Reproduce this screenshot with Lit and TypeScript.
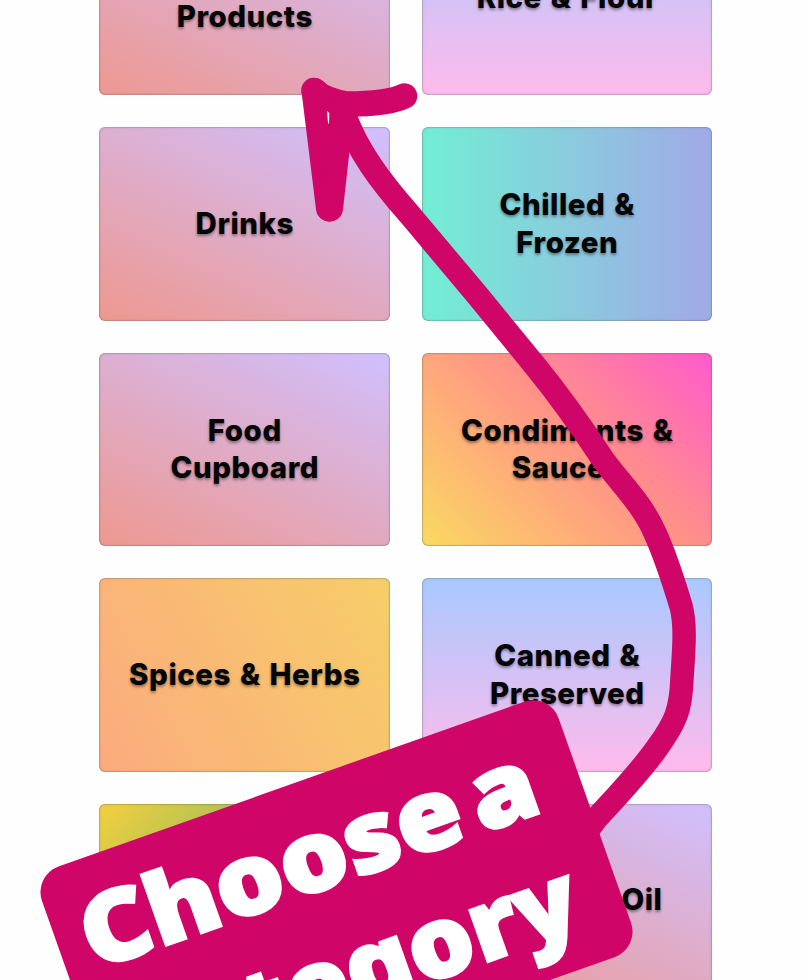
import { LitElement, html, css, svg } from "lit";
import { customElement, property } from "lit/decorators.js";

interface Category {
  // each entry is one line of the label
  lines: string[];
  theme: string;
}

const CATEGORIES: Category[] = [
  { lines: ["Dairy", "Products"], theme: "blush" },
  { lines: ["Rice & Flour"], theme: "sky" },
  { lines: ["Drinks"], theme: "blush" },
  { lines: ["Chilled &", "Frozen"], theme: "mint" },
  { lines: ["Food", "Cupboard"], theme: "blush" },
  { lines: ["Condiments &", "Sauces"], theme: "sunset" },
  { lines: ["Spices & Herbs"], theme: "amber" },
  { lines: ["Canned &", "Preserved"], theme: "sky" },
  { lines: ["Snacks"], theme: "lime" },
  { lines: ["Sauces & Oil"], theme: "blush" },
];

@customElement("category-card")
export class CategoryCard extends LitElement {
  @property({ type: Array }) lines: string[] = [];
  @property({ reflect: true }) theme = "blush";

  static styles = css`
    :host {
      display: flex;
      flex-direction: column;
      align-items: center;
      justify-content: center;
      box-sizing: border-box;
      border-radius: 6px;
      box-shadow: inset 0 0 0 1px rgba(90, 90, 90, 0.18), inset 0 0 3px rgba(90, 90, 90, 0.35);
    }
    :host([theme="blush"]) {
      background: linear-gradient(25deg, #ee9890 0%, #d0c0ff 100%);
    }
    :host([theme="sky"]) {
      background: linear-gradient(180deg, #a9c9ff 0%, #ffbbec 100%);
    }
    :host([theme="mint"]) {
      background: linear-gradient(90deg, #74ebd5 5%, #9face6 95%);
    }
    :host([theme="sunset"]) {
      background: linear-gradient(45deg, #fada61 0%, #ff9188 56%, #ff5acd 100%);
    }
    :host([theme="amber"]) {
      background: linear-gradient(62deg, #fbab7e 0%, #f7ce68 100%);
    }
    :host([theme="lime"]) {
      background: linear-gradient(132deg, #f4d03f 0%, #16a085 100%);
    }
    .line {
      font: 800 29.5px/37.6px Inter, "Liberation Sans", sans-serif;
      letter-spacing: 0.5px;
      margin-right: -0.5px;
      word-spacing: 2px;
      color: #050505;
      white-space: nowrap;
      text-shadow: 0 2px 3px rgba(0, 0, 0, 0.4);
    }
  `;

  render() {
    return this.lines.map((line) => html`<span class="line">${line}</span>`);
  }
}

@customElement("app-root")
export class AppRoot extends LitElement {
  static styles = css`
    :host {
      display: block;
      position: relative;
      width: 809px;
      height: 980px;
      overflow: hidden;
      background: #fefefe;
    }
    /* the list is scrolled so that the first row is cut by the top edge */
    .grid {
      display: grid;
      grid-template-columns: 291px 290px;
      grid-auto-rows: 193.5px;
      gap: 32px;
      margin: -98.5px 0 0 99px;
    }
    .annotation {
      position: absolute;
      inset: 0;
      width: 809px;
      height: 980px;
    }
    .stroke {
      fill: none;
      stroke: #d00568;
      stroke-linecap: round;
      stroke-linejoin: round;
    }
    .badge {
      fill: #d00568;
    }
    .gap {
      fill: #fefefe;
    }
    .callout {
      fill: #fff;
      stroke: #fff;
      stroke-width: 3px;
      font: 900 98px "Noto Sans", "Open Sans", sans-serif;
      word-spacing: -14px;
    }
  `;

  // hand drawn arrow, from the badge up to the first row
  private renderArrow() {
    return svg`
      <path class="stroke" stroke-width="23.5"
        d="M585 834 L596 819 C618 795 641 771 657 748 C676 722 681 709 682 678
           C684 648 686 625 681 606 C674 583 666 557 655 533 C642 503 619 482 602 458
           C579 423 558 394 536 367 L478 296 L410 215 C380 181 358 151 345 116" />
      <path class="stroke" stroke-width="25.5"
        d="M404.500 96 C390 103 366 104 347 104 C334 102 323 99 314 90.500" />
      <path class="stroke" stroke-width="26" d="M314.500 91 L329 208.500" />
      <path class="stroke" stroke-width="26" d="M330 208.500 L336 155 L341 108" />
      <path class="stroke" stroke-width="14" d="M329 135 L331 200" />
      <path class="gap" d="M327 111 L329.300 113 L329 124 L328 123 Z" />
    `;
  }

  private renderBadge() {
    return svg`
      <g transform="translate(33 875.6) rotate(-19.5)">
        <rect class="badge" width="548" height="271" rx="27" />
        <text class="callout" x="26" y="110" textLength="478" lengthAdjust="spacingAndGlyphs">Choose a</text>
        <text class="callout" x="22" y="233" textLength="482" lengthAdjust="spacingAndGlyphs">Category</text>
      </g>
    `;
  }

  render() {
    return html`
      <div class="grid">
        ${CATEGORIES.map(
          (c) => html`<category-card .lines=${c.lines} .theme=${c.theme}></category-card>`
        )}
      </div>
      <svg class="annotation" viewBox="0 0 809 980">
        ${this.renderArrow()} ${this.renderBadge()}
      </svg>
    `;
  }
}
